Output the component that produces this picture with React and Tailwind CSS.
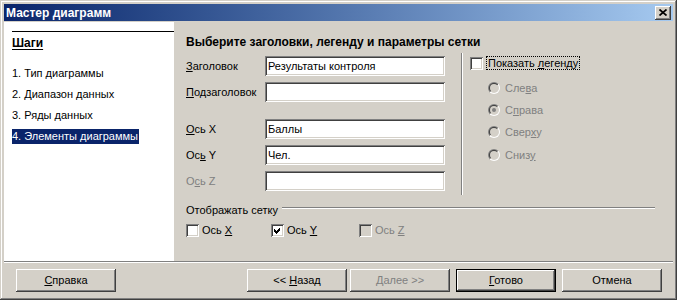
import React from "react";

const RAISED =
  "shadow-[inset_-1px_-1px_#404040,inset_1px_1px_#ffffff,inset_-2px_-2px_#808080,inset_2px_2px_#d4d0c8]";
const SUNKEN =
  "shadow-[inset_1px_1px_#808080,inset_-1px_-1px_#ffffff,inset_2px_2px_#404040,inset_-2px_-2px_#d4d0c8]";

function Box({ checked, disabled }) {
  return (
    <span
      className={
        "w-[13px] h-[13px] shrink-0 flex items-center justify-center shadow-[inset_1px_1px_#808080,inset_-1px_-1px_#ffffff,inset_2px_2px_#404040,inset_-2px_-2px_#d4d0c8] " +
        (disabled ? "bg-[#d4d0c8]" : "bg-white")
      }
    >
      {checked && (
        <svg width="13" height="13" viewBox="0 0 13 13" shapeRendering="crispEdges">
          <polygon points="3,5 5,7 9,3 9,6 5,10 3,8" fill="#000" />
        </svg>
      )}
    </span>
  );
}

function Radio({ checked }) {
  return (
    <svg width="12" height="12" viewBox="0 0 12 12" className="shrink-0">
      <defs>
        <linearGradient id="rdo" x1="0" y1="0" x2="1" y2="1">
          <stop offset="0.5" stopColor="#808080" />
          <stop offset="0.5" stopColor="#ffffff" />
        </linearGradient>
        <linearGradient id="rdi" x1="0" y1="0" x2="1" y2="1">
          <stop offset="0.5" stopColor="#404040" />
          <stop offset="0.5" stopColor="#d4d0c8" />
        </linearGradient>
      </defs>
      <circle cx="6" cy="6" r="6" fill="url(#rdo)" />
      <circle cx="6" cy="6" r="5" fill="url(#rdi)" />
      <circle cx="6" cy="6" r="4" fill="#d4d0c8" />
      {checked && <circle cx="6" cy="6" r="2" fill="#808080" />}
    </svg>
  );
}

function Field({ label, value, mt, disabled }) {
  return (
    <div className={"flex items-center h-[20px] " + mt}>
      <div className={"w-[79px] " + (disabled ? "text-[#808080]" : "text-black")}>{label}</div>
      <div
        className={
          "w-[180px] h-[20px] bg-white pl-[3px] flex items-center shadow-[inset_1px_1px_#808080,inset_-1px_-1px_#ffffff,inset_2px_2px_#404040,inset_-2px_-2px_#d4d0c8]"
        }
      >
        {value}
      </div>
    </div>
  );
}

function RadioRow({ children, checked, mt }) {
  return (
    <div className={"flex items-center h-[14px] text-[#808080] " + mt}>
      <Radio checked={checked} />
      <span className="ml-[5px]">{children}</span>
    </div>
  );
}

function Btn({ children, className, def, disabled }) {
  return (
    <div
      className={
        "w-[100px] h-[23px] flex items-center justify-center bg-[#d4d0c8] " +
        (def
          ? "shadow-[inset_0_0_0_1px_#000000,inset_-2px_-2px_#404040,inset_2px_2px_#ffffff,inset_-3px_-3px_#808080] "
          : "shadow-[inset_-1px_-1px_#404040,inset_1px_1px_#ffffff,inset_-2px_-2px_#808080,inset_2px_2px_#d4d0c8] ") +
        (disabled ? "text-[#808080] " : "text-black ") +
        (className || "")
      }
    >
      {children}
    </div>
  );
}

export default function App() {
  return (
    <div className="w-[677px] h-[300px] bg-[#d4d0c8] p-[4px] flex flex-col font-['Liberation_Sans',Arial,sans-serif] text-[11px] leading-[13px] text-black shadow-[inset_-1px_-1px_#404040,inset_1px_1px_#d4d0c8,inset_-2px_-2px_#808080,inset_2px_2px_#ffffff]">
      {/* Title bar */}
      <div className="h-[17px] mb-[1px] flex items-center bg-linear-to-r from-[#0a246a] to-[#a6caf0]">
        <div className="pl-[2px] text-white font-bold text-[12px] leading-[14px]">Мастер диаграмм</div>
        <div className="ml-auto mr-[2px] w-[16px] h-[14px] flex items-center justify-center bg-[#d4d0c8] shadow-[inset_-1px_-1px_#404040,inset_1px_1px_#ffffff,inset_-2px_-2px_#808080,inset_2px_2px_#d4d0c8]">
          <svg width="8" height="7" viewBox="0 0 8 7" className="mb-[1px]">
            <path d="M0.5 0.5 L7.5 6.5 M7.5 0.5 L0.5 6.5" stroke="#000" strokeWidth="1.7" />
          </svg>
        </div>
      </div>

      {/* Main */}
      <div className="flex h-[239px]">
        {/* Steps pane */}
        <div className="w-[170px] bg-white pl-[8px] pt-[9px] flex flex-col">
          <div className="h-[1px] bg-black" />
          <div className="mt-[4px] h-[14px] font-bold text-[12px] leading-[14px] underline underline-offset-[2px]">Шаги</div>
          <div className="mt-[16px] h-[15px] leading-[15px]">1. Тип диаграммы</div>
          <div className="mt-[6px] h-[15px] leading-[15px]">2. Диапазон данных</div>
          <div className="mt-[6px] h-[15px] leading-[15px]">3. Ряды данных</div>
          <div className="mt-[6px] h-[15px] leading-[15px] w-fit pr-[1px] bg-[#0a246a] text-white">4. Элементы диаграммы</div>
        </div>

        {/* Right pane */}
        <div className="flex-1 pl-[12px] pt-[13px] flex flex-col">
          <div className="h-[14px] font-bold text-[12px] leading-[14px]">Выберите заголовки, легенду и параметры сетки</div>
          <div className="flex mt-[4px] h-[142px]">
            <div className="w-[259px] pt-[3px] flex flex-col">
              <Field label={<><u>З</u>аголовок</>} value="Результаты контроля" mt="" />
              <Field label={<><u>П</u>одзаголовок</>} value="" mt="mt-[6px]" />
              <Field label={<><u>О</u>сь X</>} value="Баллы" mt="mt-[17px]" />
              <Field label={<>Ос<u>ь</u> Y</>} value="Чел." mt="mt-[6px]" />
              <Field label={<>О<u>с</u>ь Z</>} value="" mt="mt-[6px]" disabled />
            </div>
            <div className="ml-[16px] w-[2px] h-full border-l border-l-[#808080] border-r border-r-white" />
            <div className="ml-[7px] pt-[3px] flex flex-col">
              <div className="flex items-center h-[14px]">
                <Box />
                <span className="ml-[3px] h-[14px] px-[1px] border border-dotted border-black leading-[12px]">
                  Показать <u>л</u>егенду
                </span>
              </div>
              <div className="ml-[18px] flex flex-col">
                <RadioRow mt="mt-[11px]">Сле<u>в</u>а</RadioRow>
                <RadioRow mt="mt-[8px]" checked>С<u>п</u>рава</RadioRow>
                <RadioRow mt="mt-[8px]">Свер<u>х</u>у</RadioRow>
                <RadioRow mt="mt-[9px]">Сниз<u>у</u></RadioRow>
              </div>
            </div>
          </div>

          <div className="mt-[8px] h-[14px] flex pr-[18px]">
            <span className="leading-[14px]">Отображать сетку</span>
            <div className="flex-1 ml-[4px] mt-[4px] h-[2px] border-t border-t-[#808080] border-b border-b-white" />
          </div>

          <div className="mt-[7px] h-[13px] flex items-center">
            <div className="w-[85px] flex items-center">
              <Box />
              <span className="ml-[3px]">Ось <u>X</u></span>
            </div>
            <div className="w-[88px] flex items-center">
              <Box checked />
              <span className="ml-[3px]">Ось <u>Y</u></span>
            </div>
            <div className="flex items-center text-[#808080]">
              <Box disabled />
              <span className="ml-[3px]">Ось <u>Z</u></span>
            </div>
          </div>
        </div>
      </div>

      {/* Separator */}
      <div className="h-[2px] border-t border-t-[#808080] border-b border-b-white" />

      {/* Buttons */}
      <div className="pt-[6px] flex">
        <Btn className="ml-[12px]"><span><u>С</u>правка</span></Btn>
        <Btn className="ml-[131px]"><span>&lt;&lt; <u>Н</u>азад</span></Btn>
        <Btn className="ml-[3px]" disabled><span><u>Д</u>алее &gt;&gt;</span></Btn>
        <Btn className="ml-[6px]" def><span><u>Г</u>отово</span></Btn>
        <Btn className="ml-[6px]"><span>Отмена</span></Btn>
      </div>
    </div>
  );
}
